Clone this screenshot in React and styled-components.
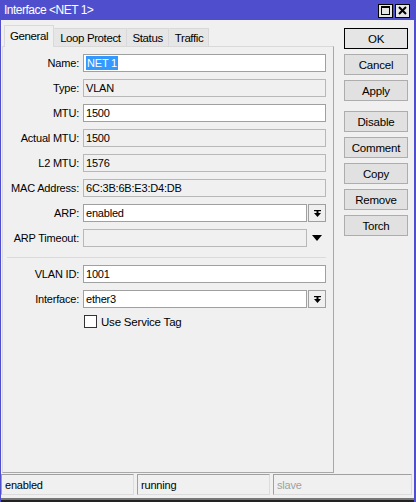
import React from 'react'
import styled, { createGlobalStyle } from 'styled-components'

const GlobalStyle = createGlobalStyle`
  html, body {
    margin: 0;
    padding: 0;
    background: #f0f0f0;
  }
  body {
    font-family: "Liberation Sans", Arial, sans-serif;
    font-size: 11px;
    letter-spacing: -0.2px;
  }
`

const fields = [
  { label: 'Name', value: 'NET 1', editable: true, selected: true },
  { label: 'Type', value: 'VLAN' },
  { label: 'MTU', value: '1500', editable: true },
  { label: 'Actual MTU', value: '1500' },
  { label: 'L2 MTU', value: '1576' },
  { label: 'MAC Address', value: '6C:3B:6B:E3:D4:DB' },
  { label: 'ARP', value: 'enabled', editable: true, drop: 'box' },
  { label: 'ARP Timeout', value: '', drop: 'plain' },
]

const vlanFields = [
  { label: 'VLAN ID', value: '1001', editable: true },
  { label: 'Interface', value: 'ether3', editable: true, drop: 'box' },
]

const buttons = ['OK', 'Cancel', 'Apply', 'Disable', 'Comment', 'Copy', 'Remove', 'Torch']

function DropIcon() {
  return (
    <svg width="9" height="9" viewBox="0 0 9 9">
      <rect x="1" y="1" width="7" height="1.2" fill="#000" />
      <rect x="3.5" y="2" width="2" height="2" fill="#000" />
      <polygon points="1,4 8,4 4.5,8" fill="#000" />
    </svg>
  )
}

function Row({ f }) {
  return (
    <FieldRow>
      <Label>{f.label}:</Label>
      <Input $editable={f.editable}>
        {f.selected ? <Selected>{f.value}</Selected> : f.value}
      </Input>
      {f.drop === 'box' && (
        <DropButton>
          <DropIcon />
        </DropButton>
      )}
      {f.drop === 'plain' && (
        <DropPlain>
          <svg width="10" height="6" viewBox="0 0 10 6">
            <polygon points="0,0 10,0 5,6" fill="#000" />
          </svg>
        </DropPlain>
      )}
    </FieldRow>
  )
}

export default function App() {
  return (
    <>
      <GlobalStyle />
      <Window>
        <TitleBar>
          <Title>Interface &lt;NET 1&gt;</Title>
          <TitleButtons>
            <TitleBtn>
              <svg width="9" height="9" viewBox="0 0 9 9">
                <rect x="0.5" y="0.5" width="8" height="8" fill="none" stroke="#000" />
                <rect x="0" y="0" width="9" height="2" fill="#000" />
              </svg>
            </TitleBtn>
            <TitleBtn>
              <svg width="9" height="9" viewBox="0 0 9 9">
                <path d="M1 1 L8 8 M8 1 L1 8" stroke="#000" strokeWidth="2" />
              </svg>
            </TitleBtn>
          </TitleButtons>
        </TitleBar>
        <Body>
          <LeftColumn>
            <TabStrip>
              <Tab $active>General</Tab>
              <Tab>Loop Protect</Tab>
              <Tab>Status</Tab>
              <Tab>Traffic</Tab>
            </TabStrip>
            <Panel>
              {fields.map((f) => (
                <Row key={f.label} f={f} />
              ))}
              <Separator />
              {vlanFields.map((f) => (
                <Row key={f.label} f={f} />
              ))}
              <CheckRow>
                <CheckBox />
                <span>Use Service Tag</span>
              </CheckRow>
            </Panel>
          </LeftColumn>
          <ButtonColumn>
            {buttons.map((b) => (
              <Button key={b} $default={b === 'OK'} $spaced={b === 'Disable'}>
                {b}
              </Button>
            ))}
          </ButtonColumn>
        </Body>
        <StatusBar>
          <StatusCell $w={133}>enabled</StatusCell>
          <StatusCell $w={133}>running</StatusCell>
          <StatusCell $w={139} $dim>slave</StatusCell>
        </StatusBar>
        <BottomFrame />
      </Window>
    </>
  )
}

const Window = styled.div`
  width: 416px;
  height: 502px;
  box-sizing: border-box;
  border-left: 1px solid #4f4fce;
  border-right: 2px solid #4f4fce;
  background: #f0f0f0;
  display: flex;
  flex-direction: column;
  overflow: hidden;
`

const TitleBar = styled.div`
  height: 20px;
  margin: 0 -2px 0 -1px;
  background: #4f4fce;
  color: #fff;
  display: flex;
  align-items: center;
  justify-content: space-between;
  padding: 0 6px 0 4px;
  flex-shrink: 0;
`

const Title = styled.span`
  font-size: 12px;
  letter-spacing: -0.5px;
`

const TitleButtons = styled.div`
  display: flex;
  gap: 2px;
  margin-top: 1px;
`

const TitleBtn = styled.div`
  width: 13px;
  height: 12px;
  border: 1px solid #000;
  background: #e6e6e6;
  display: flex;
  align-items: center;
  justify-content: center;
`

const Body = styled.div`
  display: flex;
  flex: 1;
`

const LeftColumn = styled.div`
  margin-left: 1px;
  width: 332px;
  display: flex;
  flex-direction: column;
`

const TabStrip = styled.div`
  height: 26px;
  display: flex;
  align-items: flex-end;
  padding-left: 2px;
`

const Tab = styled.div`
  box-sizing: border-box;
  height: ${(p) => (p.$active ? '22px' : '18px')};
  margin-bottom: ${(p) => (p.$active ? '-1px' : '0')};
  padding: ${(p) => (p.$active ? '0 5px 2px' : '0 5px')};
  border: 1px solid #d9d9d9;
  border-bottom: none;
  border-left-color: ${(p) => (p.$active ? '#d9d9d9' : 'transparent')};
  background: ${(p) => (p.$active ? '#f0f0f0' : '#e6e6e6')};
  display: flex;
  align-items: center;
  font-size: 11.5px;
  letter-spacing: -0.4px;
  position: relative;
  z-index: ${(p) => (p.$active ? 2 : 1)};
`

const Panel = styled.div`
  box-sizing: border-box;
  height: 427px;
  border: 1px solid #d9d9d9;
  border-right-color: #a8a8a8;
  border-bottom-color: #a8a8a8;
  padding: 7px 7px 0 0;
  display: flex;
  flex-direction: column;
  gap: 7px;
`

const FieldRow = styled.div`
  display: flex;
  align-items: center;
  height: 18px;
`

const Label = styled.div`
  width: 76px;
  margin-right: 4px;
  text-align: right;
  white-space: nowrap;
`

const Input = styled.div`
  flex: 1;
  box-sizing: border-box;
  height: 18px;
  border: 1px solid ${(p) => (p.$editable ? '#a0a0a0' : '#b8b8b8')};
  background: ${(p) => (p.$editable ? '#fff' : '#f0f0f0')};
  padding-left: 2px;
  display: flex;
  align-items: center;
  white-space: nowrap;
`

const Selected = styled.span`
  background: #3399ff;
  color: #fff;
  padding: 1px 1px;
`

const DropButton = styled.div`
  box-sizing: border-box;
  width: 18px;
  height: 18px;
  margin-left: 1px;
  border: 1px solid #a0a0a0;
  background: #f0f0f0;
  display: flex;
  align-items: center;
  justify-content: center;
`

const DropPlain = styled.div`
  width: 19px;
  height: 18px;
  display: flex;
  align-items: center;
  justify-content: center;
`

const Separator = styled.div`
  height: 1px;
  margin: 3px 0 0 4px;
  background: #dadada;
`

const CheckRow = styled.div`
  display: flex;
  align-items: center;
  height: 13px;
  padding-left: 81px;
  gap: 4px;
  font-size: 11.5px;
`

const CheckBox = styled.div`
  box-sizing: border-box;
  width: 13px;
  height: 13px;
  border: 1px solid #333;
  background: #fff;
`

const ButtonColumn = styled.div`
  margin-left: 10px;
  padding-top: 8px;
  width: 64px;
  display: flex;
  flex-direction: column;
  gap: 5px;
`

const Button = styled.div`
  box-sizing: border-box;
  height: 21px;
  margin-top: ${(p) => (p.$spaced ? '5px' : '0')};
  border: 1px solid ${(p) => (p.$default ? '#000' : '#adadad')};
  background: ${(p) => (p.$default ? '#e5e5e5' : '#e1e1e1')};
  display: flex;
  align-items: center;
  justify-content: center;
  font-size: 11.5px;
`

const StatusBar = styled.div`
  height: 21px;
  margin-top: 1px;
  display: flex;
  gap: 3px;
`

const StatusCell = styled.div`
  box-sizing: border-box;
  width: ${(p) => p.$w}px;
  height: 21px;
  border: 1px solid #dcdcdc;
  border-top-color: #a0a0a0;
  border-left-color: #a0a0a0;
  padding-left: 3px;
  display: flex;
  align-items: center;
  color: ${(p) => (p.$dim ? '#a0a0a0' : '#000')};
`

const BottomFrame = styled.div`
  height: 7px;
  box-sizing: border-box;
  margin: 0 -2px 0 -1px;
  border-top: 3px solid #f0f0f0;
  border-bottom: 2px solid #222;
  background: #777;
`
